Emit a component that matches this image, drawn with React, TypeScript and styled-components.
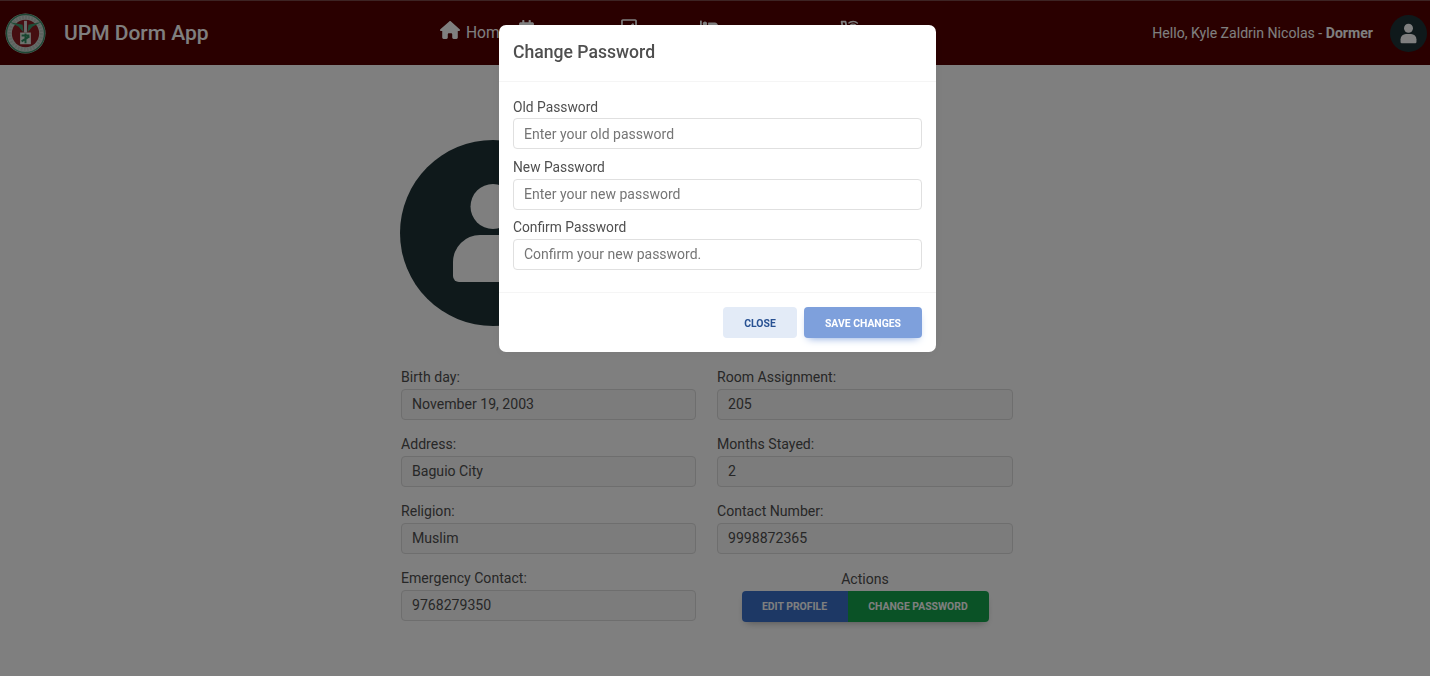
import React from 'react';
import styled, { createGlobalStyle } from 'styled-components';
import { FaCalendarAlt, FaRegCheckSquare, FaBed } from 'react-icons/fa';
import { FaHouse } from 'react-icons/fa6';
import { MdOutlineWifiCalling3 } from 'react-icons/md';

const GlobalStyle = createGlobalStyle`
  html, body {
    margin: 0;
    padding: 0;
    height: 100%;
    overflow: hidden;
    background: #fff;
    font-family: Roboto, "Liberation Sans", sans-serif;
  }
`;

const navLinks = [
  { icon: <FaHouse />, label: 'Home', size: 20, lift: 6, width: 78 },
  { icon: <FaCalendarAlt />, label: 'Calendar', size: 17, lift: 9, width: 102 },
  { icon: <FaRegCheckSquare />, label: 'Tasks', size: 18, lift: 12, width: 80 },
  { icon: <FaBed />, label: 'Room Requests', size: 18, lift: 14, width: 138 },
  { icon: <MdOutlineWifiCalling3 />, label: 'Contact', size: 22, lift: 8, width: 90 },
];

const fields = [
  { label: 'Birth day:', value: 'November 19, 2003' },
  { label: 'Room Assignment:', value: '205' },
  { label: 'Address:', value: 'Baguio City' },
  { label: 'Months Stayed:', value: '2' },
  { label: 'Religion:', value: 'Muslim' },
  { label: 'Contact Number:', value: '9998872365' },
];

const passwordFields = [
  { label: 'Old Password', placeholder: 'Enter your old password' },
  { label: 'New Password', placeholder: 'Enter your new password' },
  { label: 'Confirm Password', placeholder: 'Confirm your new password.' },
];

const Seal = () => (
  <svg width="41" height="41" viewBox="0 0 42 42">
    <circle cx="21" cy="21" r="20.5" fill="#cfd8d2" />
    <circle cx="21" cy="21" r="19.5" fill="none" stroke="#3f8f6b" strokeWidth="1.5" />
    <circle cx="21" cy="21" r="16.5" fill="none" stroke="#b9c6bf" strokeWidth="3.5" strokeDasharray="2 1.2" />
    <circle cx="21" cy="21" r="14" fill="#8a1c22" />
    <path d="M4 9 L14 14 L19 20 L18 12 Z M38 9 L28 14 L23 20 L24 12 Z" fill="#3f9a70" />
    <path d="M19.5 8 h3 v12 h-3 Z" fill="#d8d8d8" />
    <rect x="15.5" y="20" width="11" height="12" fill="#dfe8e0" />
    <path d="M17 23 h8 M21 21 v10 M17 29 l8 -5" stroke="#2e8b5f" strokeWidth="2" />
  </svg>
);

const UserIcon = ({ size }: { size: number }) => (
  <svg width={size} height={size} viewBox="0 0 186 186">
    <circle cx="93" cy="93" r="93" fill="#1e3236" />
    <circle cx="93" cy="66.5" r="22.5" fill="#fff" />
    <path
      d="M53 136 V122 a27 27 0 0 1 27 -27 h26 a27 27 0 0 1 27 27 v14 a6 6 0 0 1 -6 6 H59 a6 6 0 0 1 -6 -6 Z"
      fill="#fff"
    />
  </svg>
);

const App = () => {
  return (
    <>
      <GlobalStyle />
      <Page>
        <Navbar>
          <Brand>
            <Seal />
            <BrandName>UPM Dorm App</BrandName>
          </Brand>
          <NavLinks>
            {navLinks.map(link => (
              <NavLink key={link.label} $size={link.size} $lift={link.lift} $width={link.width}>
                {link.icon}
                <span>{link.label}</span>
              </NavLink>
            ))}
          </NavLinks>
          <UserArea>
            <Greeting>
              Hello, Kyle Zaldrin Nicolas - <strong>Dormer</strong>
            </Greeting>
            <UserIcon size={37} />
          </UserArea>
        </Navbar>

        <Main>
          <Profile>
            <AvatarRow>
              <UserIcon size={186} />
            </AvatarRow>
            <FieldGrid>
              {fields.map(field => (
                <Field key={field.label}>
                  <FieldLabel>{field.label}</FieldLabel>
                  <FieldBox>{field.value}</FieldBox>
                </Field>
              ))}
              <Field>
                <FieldLabel>Emergency Contact:</FieldLabel>
                <FieldBox>9768279350</FieldBox>
              </Field>
              <Field>
                <ActionsLabel>Actions</ActionsLabel>
                <ButtonGroup>
                  <GroupButton $bg="#3b71ca">Edit Profile</GroupButton>
                  <GroupButton $bg="#14a44d" $wide>Change Password</GroupButton>
                </ButtonGroup>
              </Field>
            </FieldGrid>
          </Profile>
        </Main>
      </Page>

      <Backdrop />
      <Modal>
        <ModalHeader>Change Password</ModalHeader>
        <ModalBody>
          {passwordFields.map(field => (
            <ModalField key={field.label}>
              <ModalLabel>{field.label}</ModalLabel>
              <ModalInput type="password" placeholder={field.placeholder} />
            </ModalField>
          ))}
        </ModalBody>
        <ModalFooter>
          <CloseButton>Close</CloseButton>
          <SaveButton>Save Changes</SaveButton>
        </ModalFooter>
      </Modal>
    </>
  );
};

const Page = styled.div`
  height: 676px;
  display: flex;
  flex-direction: column;
`;

const Navbar = styled.header`
  height: 65px;
  flex-shrink: 0;
  box-sizing: border-box;
  background: #540000;
  border-top: 1px solid #7a4646;
  display: flex;
  align-items: center;
  padding: 0 3px 0 5px;
`;

const Brand = styled.div`
  width: 435px;
  display: flex;
  align-items: center;
  gap: 18px;
`;

const BrandName = styled.div`
  font-size: 21px;
  font-weight: 500;
  color: #fff;
  white-space: nowrap;
`;

const NavLinks = styled.nav`
  display: flex;
  align-items: center;
  flex: 1;
`;

const NavLink = styled.a<{ $size: number; $lift: number; $width: number }>`
  width: ${p => p.$width}px;
  display: flex;
  align-items: center;
  gap: 6px;
  color: #fff;
  font-size: 15.6px;
  white-space: nowrap;

  svg {
    width: ${p => p.$size}px;
    height: ${p => p.$size}px;
    margin-bottom: ${p => p.$lift}px;
    flex-shrink: 0;
  }
`;

const UserArea = styled.div`
  display: flex;
  align-items: center;
  gap: 17px;
`;

const Greeting = styled.div`
  font-size: 14.1px;
  color: #fff;
  white-space: nowrap;

  strong {
    font-weight: 700;
  }
`;

const Main = styled.main`
  flex: 1;
  display: flex;
  justify-content: center;
  padding-right: 16px;
`;

const Profile = styled.div`
  width: 612px;
  padding-top: 75px;
`;

const AvatarRow = styled.div`
  height: 186px;
  margin-bottom: 42px;

  svg {
    margin-left: -1px;
    display: block;
  }
`;

const FieldGrid = styled.div`
  display: grid;
  grid-template-columns: 295px 296px;
  column-gap: 21px;
  row-gap: 15px;
`;

const Field = styled.div`
  display: flex;
  flex-direction: column;
`;

const FieldLabel = styled.label`
  font-size: 14.1px;
  line-height: 18px;
  height: 21px;
  color: #4f4f4f;
`;

const ActionsLabel = styled(FieldLabel)`
  text-align: center;
  line-height: 20px;
`;

const FieldBox = styled.div`
  height: 31px;
  box-sizing: border-box;
  border: 1px solid #dcdcdc;
  border-radius: 4px;
  padding: 0 10px;
  background: #f8f8f8;
  font-size: 14.1px;
  line-height: 29px;
  color: #4f4f4f;
`;

const ButtonGroup = styled.div`
  align-self: center;
  display: flex;
  margin-top: 1px;
  border-radius: 4px;
  overflow: hidden;
  box-shadow: 0 4px 9px -4px rgba(0, 0, 0, 0.4);
`;

const GroupButton = styled.button<{ $bg: string; $wide?: boolean }>`
  height: 31px;
  width: ${p => (p.$wide ? 141 : 106)}px;
  padding: 0;
  border: 0;
  background: ${p => p.$bg};
  color: #fff;
  font-family: inherit;
  font-size: 10.4px;
  font-weight: 700;
  text-transform: uppercase;
`;

const Backdrop = styled.div`
  position: fixed;
  inset: 0;
  background: rgba(0, 0, 0, 0.5);
`;

const Modal = styled.div`
  position: fixed;
  top: 25px;
  left: 499px;
  width: 437px;
  height: 327px;
  box-sizing: border-box;
  display: flex;
  flex-direction: column;
  background: #fff;
  border-radius: 7px;
  box-shadow: 0 2px 15px -3px rgba(0, 0, 0, 0.07);
`;

const ModalHeader = styled.div`
  height: 57px;
  box-sizing: border-box;
  padding: 0 14px;
  border-bottom: 1px solid #f5f5f5;
  font-size: 17.6px;
  font-weight: 500;
  line-height: 54px;
  color: #4f4f4f;
`;

const ModalBody = styled.div`
  flex: 1;
  padding: 15.6px 14px 0;
  display: flex;
  flex-direction: column;
  gap: 8.8px;
`;

const ModalField = styled.div`
  display: flex;
  flex-direction: column;
`;

const ModalLabel = styled.label`
  font-size: 13.8px;
  line-height: 18px;
  height: 20.6px;
  color: #4f4f4f;
`;

const ModalInput = styled.input`
  height: 31px;
  box-sizing: border-box;
  border: 1px solid #e0e0e0;
  border-radius: 4px;
  padding: 0 10px;
  outline: none;
  font-family: inherit;
  font-size: 14px;

  &::placeholder {
    color: #757575;
    opacity: 1;
  }
`;

const ModalFooter = styled.div`
  height: 60px;
  box-sizing: border-box;
  border-top: 1px solid #f5f5f5;
  padding: 14px 14px 0;
  display: flex;
  justify-content: flex-end;
  gap: 7px;
`;

const ModalButton = styled.button`
  height: 31px;
  padding: 1px 0 0;
  border: 0;
  border-radius: 4px;
  font-family: inherit;
  font-size: 10.4px;
  font-weight: 700;
  text-transform: uppercase;
`;

const CloseButton = styled(ModalButton)`
  width: 74px;
  background: #e3ebf7;
  color: #285192;
`;

const SaveButton = styled(ModalButton)`
  width: 118px;
  background: #7ea0dc;
  color: #fff;
  box-shadow: 0 4px 9px -4px #7ea0dc;
`;

export default App;
